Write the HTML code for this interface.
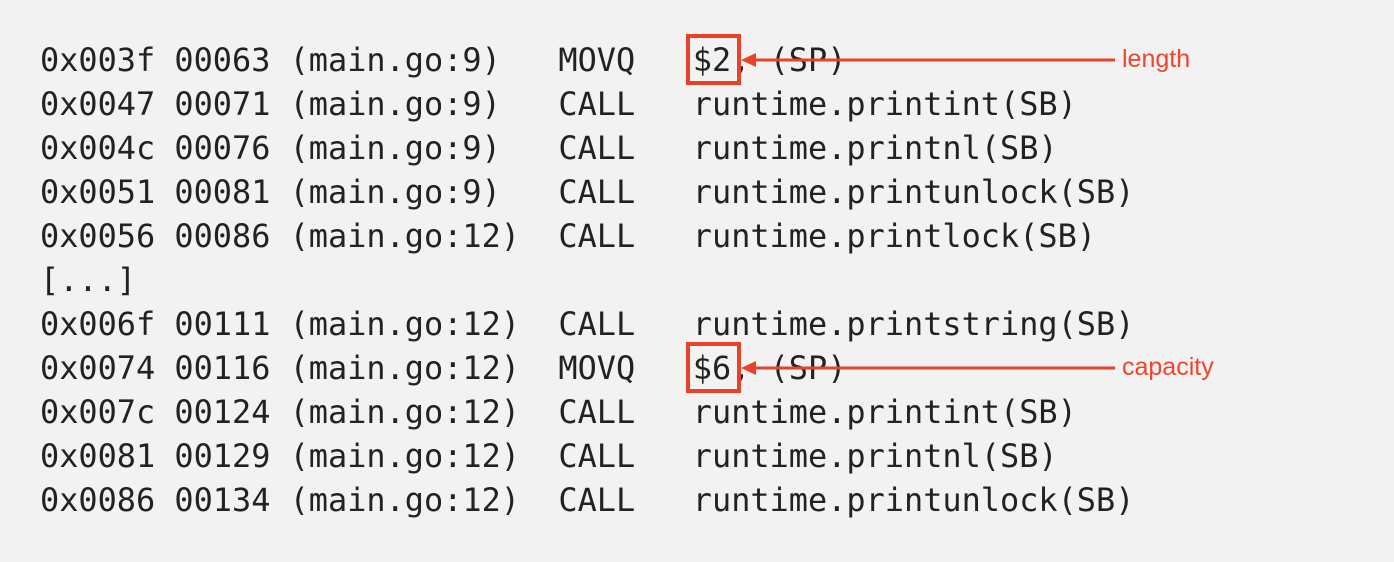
<!DOCTYPE html>
<html><head><style>
html,body{margin:0;padding:0;background:#f2f2f2;width:1394px;height:562px;overflow:hidden}
pre{position:absolute;left:40px;top:38px;margin:0;font-family:"DejaVu Sans Mono","Liberation Mono",monospace;font-size:31.9px;line-height:44px;color:#222}
.box{position:absolute;border:4px solid #e8432a;width:47px;height:43px;box-sizing:content-box}
.lab{position:absolute;font-family:"Liberation Sans",sans-serif;font-size:25px;color:#f0442c}
</style></head><body>
<pre>0x003f 00063 (main.go:9)   MOVQ   $2, (SP)
0x0047 00071 (main.go:9)   CALL   runtime.printint(SB)
0x004c 00076 (main.go:9)   CALL   runtime.printnl(SB)
0x0051 00081 (main.go:9)   CALL   runtime.printunlock(SB)
0x0056 00086 (main.go:12)  CALL   runtime.printlock(SB)
[...]
0x006f 00111 (main.go:12)  CALL   runtime.printstring(SB)
0x0074 00116 (main.go:12)  MOVQ   $6, (SP)
0x007c 00124 (main.go:12)  CALL   runtime.printint(SB)
0x0081 00129 (main.go:12)  CALL   runtime.printnl(SB)
0x0086 00134 (main.go:12)  CALL   runtime.printunlock(SB)</pre>
<div class="box" style="left:686px;top:34px"></div>
<div class="box" style="left:686px;top:342px"></div>
<svg width="1394" height="562" style="position:absolute;left:0;top:0">
<line x1="752" y1="60" x2="1115" y2="60" stroke="#e8432a" stroke-width="3"/>
<polygon points="741,60 756,53 756,67" fill="#e8432a"/>
<line x1="752" y1="368" x2="1115" y2="368" stroke="#e8432a" stroke-width="3"/>
<polygon points="741,368 756,361 756,375" fill="#e8432a"/>
</svg>
<div class="lab" style="left:1122px;top:45px">length</div>
<div class="lab" style="left:1122px;top:353px">capacity</div>
</body></html>
